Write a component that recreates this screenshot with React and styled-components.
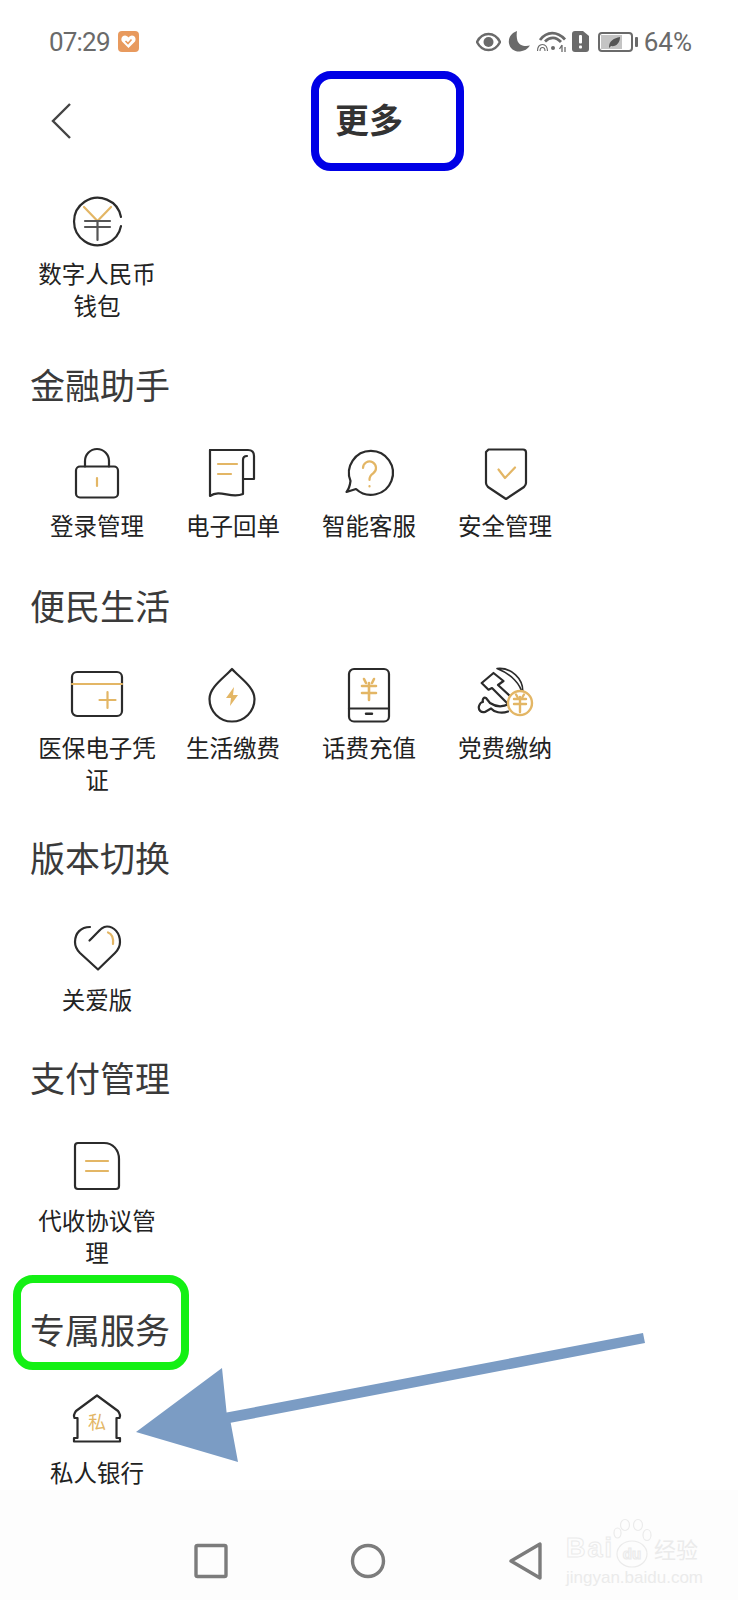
import React from "react";
import styled, { createGlobalStyle } from "styled-components";

const INK = "#2b2b2b";
const GOLD = "#e3b665";
const GREY = "#6a6a6a";
const MARK = "#ebebeb";

const GlobalStyle = createGlobalStyle`
  html, body {
    margin: 0;
    padding: 0;
    background: #fff;
  }
  body {
    font-family: "Noto Sans CJK SC", "Noto Sans", sans-serif;
  }
`;

const Page = styled.div`
  position: relative;
  width: 738px;
  height: 1600px;
  display: flex;
  flex-direction: column;
  overflow: hidden;
  background: #fff;
`;

const StatusBar = styled.div`
  height: 71px;
  padding: 12px 46px 0 49px;
  box-sizing: border-box;
  display: flex;
  align-items: center;
  color: ${GREY};
  font-family: Roboto, sans-serif;
  font-size: 26px;
`;

const StatusTime = styled.span`
  margin-right: 8px;
  letter-spacing: -0.8px;
`;

const StatusIcons = styled.div`
  margin-left: auto;
  display: flex;
  align-items: center;
`;

const StatusGlyph = styled.svg`
  margin-right: ${(p) => p.$after}px;
`;

const TopBar = styled.div`
  height: 100px;
  padding-left: 51px;
  display: flex;
  align-items: center;
`;

const TitleFrame = styled.div`
  margin-left: 240px;
  width: 153px;
  height: 100px;
  box-sizing: border-box;
  border: 8px solid #0000e6;
  border-radius: 20px;
  padding-left: 16px;
  display: flex;
  align-items: center;
`;

const Title = styled.h1`
  margin: 0 0 4px;
  font-size: 34px;
  line-height: 1.2;
  font-weight: 700;
  color: #333;
`;

const Section = styled.section`
  padding-left: 29px;
  margin-top: ${(p) => p.$top}px;
`;

const Heading = styled.h2`
  position: relative;
  width: fit-content;
  margin: 0 0 ${(p) => p.$gap}px 1px;
  font-size: 35px;
  line-height: 50px;
  font-weight: 400;
  color: #3a3a3a;

  ${(p) =>
    p.$marked &&
    `
    &::after {
      content: "";
      position: absolute;
      left: -17px;
      top: -29px;
      width: 176px;
      height: 95px;
      box-sizing: border-box;
      border: 8px solid #14f014;
      border-radius: 20px;
    }
  `}
`;

const Grid = styled.div`
  display: grid;
  grid-template-columns: repeat(4, 136px);
`;

const Item = styled.div`
  display: flex;
  flex-direction: column;
  align-items: center;
`;

const IconBox = styled.svg`
  width: 52px;
  height: 52px;
  overflow: visible;
  fill: none;
  stroke: ${INK};
  stroke-width: 2.2;
  stroke-linecap: round;
  stroke-linejoin: round;
`;

const Label = styled.div`
  width: 120px;
  margin-top: 10.5px;
  text-align: center;
  font-size: 23.5px;
  line-height: 32px;
  color: #222;
`;

const NavBar = styled.div`
  margin-top: auto;
  position: relative;
  height: 110px;
  padding-left: 132px;
  background: #fdfdfd;
  display: grid;
  grid-template-columns: repeat(3, 157.5px);
  align-items: center;
  justify-items: center;
`;

const NavIcon = styled.svg`
  width: 38px;
  height: 38px;
  margin-top: 31px;
  fill: none;
  stroke: #7c7c7c;
  stroke-width: 3.4;
  stroke-linejoin: round;
`;

const Watermark = styled.div`
  position: absolute;
  left: 566px;
  top: 30px;
  width: 132px;
  color: ${MARK};
`;

const WatermarkBrand = styled.div`
  display: flex;
  align-items: flex-end;
  height: 40px;
`;

const WatermarkLatin = styled.span`
  font-family: "Liberation Sans", sans-serif;
  font-size: 27px;
  line-height: 24px;
  font-weight: 700;
  letter-spacing: 2px;
  color: #fdfdfd;
  -webkit-text-stroke: 1px ${MARK};
`;

const WatermarkCjk = styled.span`
  margin-left: 2px;
  font-size: 22px;
  line-height: 24px;
  white-space: nowrap;
`;

const WatermarkSite = styled.div`
  margin-top: 8px;
  font-family: "Liberation Sans", sans-serif;
  font-size: 17px;
  line-height: 20px;
  white-space: nowrap;
`;

const Arrow = styled.svg`
  position: absolute;
  left: 0;
  top: 1320px;
  width: 738px;
  height: 160px;
`;

const Gold = (props) => <path stroke={GOLD} {...props} />;

const YuanIcon = () => (
  <IconBox viewBox="0 0 52 52" strokeWidth="2">
    <g transform="translate(0 -1)">
      <path d="M50 23A23.700 23.700 0 1 0 50 32" />
      <path d="M13 13L26.500 27L40 13" stroke={GOLD} />
      <path d="M14 27H39M14 33H39M26.500 27V46" stroke="#555" />
    </g>
  </IconBox>
);

const LockIcon = () => (
  <IconBox viewBox="0 0 52 52">
    <rect x="5" y="20.500" width="42" height="31" rx="4" />
    <path d="M14 20.500V15a12 12 0 0 1 24 0V20.500" />
    <Gold d="M26 32V40" />
  </IconBox>
);

const ReceiptIcon = () => (
  <IconBox viewBox="0 0 52 52">
    <path d="M3 4H41Q47 4 47 10V33H36" />
    <path d="M3 4V50C13 43 24 53 36 48V14Q36 10 40 10" />
    <Gold d="M11 18H30M11 28H24" />
  </IconBox>
);

const HelpIcon = () => (
  <IconBox viewBox="0 0 52 52">
    <path d="M7.500 35C7 39 6 43 3.500 46L13 43A22 22 0 1 0 7.500 35Z" />
    <Gold d="M20 22a6.500 6.500 0 1 1 10 5.500c-2.500 1.600-3.500 3.500-3.500 6.500M26.500 40V40.500" />
  </IconBox>
);

const ShieldIcon = () => (
  <IconBox viewBox="0 0 52 52">
    <path d="M9.500 3.500H44Q47 3.500 47 6.500V37Q47 39 45 41L27 53L9 41Q7 39 7 37V6Z" />
    <Gold d="M19.500 23.500L26 32L36 21.500" />
  </IconBox>
);

const CardIcon = () => (
  <IconBox viewBox="0 0 52 52">
    <rect x="1" y="4" width="50" height="44" rx="5" />
    <Gold d="M1 16H51M36.500 24V40M28.500 32H44.500" />
  </IconBox>
);

const DropIcon = () => (
  <IconBox viewBox="0 0 52 52">
    <path d="M25 1C33 10 47.500 19 47.500 31A22.500 22.500 0 0 1 2.500 31C2.500 19 17 10 25 1Z" />
    <polygon points="27,19 19,30 24,30 23,38 31,27 26,27" fill={GOLD} stroke="none" />
  </IconBox>
);

const PhoneIcon = () => (
  <IconBox viewBox="0 0 52 52">
    <rect x="6" y="1" width="40" height="52.500" rx="5" />
    <path d="M6 40.500H46" />
    <path d="M23 45.700H29" strokeWidth="2.400" />
    <Gold d="M21 11L23 15M31 11L29 15M19 18H33M19 25H33M26 15V32" strokeWidth="2.600" />
  </IconBox>
);

const PartyIcon = () => (
  <IconBox viewBox="0 0 52 52" strokeWidth="2">
    <path d="M2.700 15L14.500 5L24.500 13L19 17L35 31.700L29 36L13 20L9.500 21.700Z" />
    <path d="M18 .5C31 -1 46 10 43.500 27C42 16 32 6 18 .5Z" strokeWidth="1.600" />
    <path d="M29 43.500C22 46 15 44 12 40.500L6 44C2 45 -1 42 0 38C1 35 2 34 4 34C3 31 5 29 7 30L11 35C17 39 24 39 30 36" />
    <circle cx="41" cy="35" r="12" stroke={GOLD} fill="#fff" strokeWidth="2.400" />
    <Gold d="M37 26.500L38.500 29M45 26.500L43.500 29M35 31H47M35 36H47M41 29V44" strokeWidth="2.400" />
  </IconBox>
);

const HeartIcon = () => (
  <IconBox viewBox="0 0 52 52">
    <g transform="translate(0 2)">
      <path d="M19 5C10 5 4 11 4 20C4 25 6 28 9 31L27 47.500L44 31C47 28 49 25 49 20C49 11 43 4.500 36 4.500C31 4.500 29 8 18.500 18.500" />
      <Gold d="M37 10.500C41 12 42.500 17 42 22" />
    </g>
  </IconBox>
);

const DocIcon = () => (
  <IconBox viewBox="0 0 52 52">
    <path d="M7 2H33C42 2 48 9 48 18V45Q48 48 45 48H7Q4 48 4 45V5Q4 2 7 2Z" />
    <Gold d="M15 20H37M15 30H37" />
  </IconBox>
);

const HouseIcon = () => (
  <IconBox viewBox="0 0 52 52">
    <g transform="translate(0 1)">
      <path d="M26 1.500L47 17Q50 21 48.500 24H45.500V44H49V47.500H3V44H6.500V24H3.500Q2 21 5 17Z" />
      <text
        x="26"
        y="35"
        textAnchor="middle"
        fontSize="18"
        fill={GOLD}
        stroke="none"
        fontFamily="'Noto Sans CJK SC', sans-serif"
      >
        私
      </text>
    </g>
  </IconBox>
);

const PawMark = () => (
  <svg width="38" height="40" viewBox="0 0 38 40" fill="none" stroke={MARK} strokeWidth="1.200" style={{ overflow: "visible" }}>
    <ellipse cx="11" cy="5" rx="4.500" ry="5.500" />
    <ellipse cx="24" cy="5" rx="4.500" ry="5.500" />
    <ellipse cx="3.500" cy="13" rx="3.500" ry="5" />
    <ellipse cx="33" cy="15" rx="4" ry="5.500" />
    <ellipse cx="18" cy="34" rx="15" ry="13" />
    <text x="18" y="39" textAnchor="middle" fontSize="15" fontWeight="700" fontFamily="'Liberation Sans', sans-serif" fill="#fdfdfd">
      du
    </text>
  </svg>
);

const sections = [
  {
    top: 23.5,
    items: [{ label: "数字人民币钱包", icon: YuanIcon }],
  },
  {
    title: "金融助手",
    top: 38,
    gap: 37,
    items: [
      { label: "登录管理", icon: LockIcon },
      { label: "电子回单", icon: ReceiptIcon },
      { label: "智能客服", icon: HelpIcon },
      { label: "安全管理", icon: ShieldIcon },
    ],
  },
  {
    title: "便民生活",
    top: 39.5,
    gap: 38,
    items: [
      { label: "医保电子凭证", icon: CardIcon },
      { label: "生活缴费", icon: DropIcon },
      { label: "话费充值", icon: PhoneIcon },
      { label: "党费缴纳", icon: PartyIcon },
    ],
  },
  {
    title: "版本切换",
    top: 37.5,
    gap: 38,
    items: [{ label: "关爱版", icon: HeartIcon }],
  },
  {
    title: "支付管理",
    top: 37.5,
    gap: 39,
    items: [{ label: "代收协议管理", icon: DocIcon }],
  },
  {
    title: "专属服务",
    top: 36.5,
    gap: 39,
    marked: true,
    items: [{ label: "私人银行", icon: HouseIcon }],
  },
];

function StatusGlyphs() {
  return (
    <StatusIcons>
      <StatusGlyph $after={7} width="25" height="20" viewBox="0 0 25 20">
        <path d="M1 10C4 4 8 2 12.500 2S21 4 24 10C21 16 17 18 12.500 18S4 16 1 10Z" fill="none" stroke={GREY} strokeWidth="2.400" />
        <circle cx="12.500" cy="10" r="5" fill={GREY} />
      </StatusGlyph>
      <StatusGlyph $after={6} width="22" height="21" viewBox="0 0 22 21">
        <path d="M9 0C3 2 0 7 1 12.500C2 18 7 21 12 20.500C16 20 20 18 22 14.500C16 16 11 14 9.500 10C8.500 6 8.500 3 9 0Z" fill={GREY} />
      </StatusGlyph>
      <StatusGlyph $after={5} width="31" height="23" viewBox="0 0 31 23" fill="none" stroke={GREY}>
        <path d="M4 10C11 1 21 1 29 9.500" strokeWidth="2.800" />
        <path d="M9 11.500C14 6.500 20 6.500 25 12" strokeWidth="2.800" />
        <path d="M1.500 21C1.500 17 3.500 14.500 6.500 14.500S11.500 17 11.500 21M4 21C4 19 5 17.500 6.500 17.500S9 19 9 21" strokeWidth="1.100" />
        <circle cx="17" cy="18" r="2" fill={GREY} stroke="none" />
        <path d="M26 15V22M29 17V22M23.500 19L26 15" strokeWidth="1.300" />
      </StatusGlyph>
      <StatusGlyph $after={9} width="17" height="21" viewBox="0 0 17 21">
        <path d="M3 0H11L17 5V18Q17 21 14 21H3Q0 21 0 18V3Q0 0 3 0Z" fill={GREY} />
        <rect x="7" y="4" width="3" height="8.500" rx="1" fill="#fff" />
        <rect x="7" y="14.500" width="3" height="3" rx="1" fill="#fff" />
      </StatusGlyph>
      <StatusGlyph $after={5} width="41" height="20" viewBox="0 0 41 20">
        <rect x="1" y="1" width="33" height="18" rx="3" fill="none" stroke={GREY} strokeWidth="2" />
        <rect x="3" y="3" width="21" height="14" fill="#c4c4c4" />
        <path d="M11 15C11 9 16 6 22 5C22 11 18 15 13 14L11 16Z" fill="#555" />
        <rect x="37" y="5" width="3" height="10" rx="1" fill={GREY} />
      </StatusGlyph>
      <span>64%</span>
    </StatusIcons>
  );
}

export default function App() {
  return (
    <Page>
      <GlobalStyle />
      <StatusBar>
        <StatusTime>07:29</StatusTime>
        <svg width="21" height="21" viewBox="0 0 21 21">
          <rect width="21" height="21" rx="4" fill="#e89a5e" />
          <path d="M10.500 17L4 10.500C2.500 8 4 4.500 7 4.500C8.500 4.500 9.800 5.500 10.500 6.500C11.200 5.500 12.500 4.500 14 4.500C17 4.500 18.500 8 17 10.500Z" fill="#fff" />
          <path d="M7.500 10L10 12.500L13.500 8.500" fill="none" stroke="#e89a5e" strokeWidth="1.600" />
        </svg>
        <StatusGlyphs />
      </StatusBar>

      <TopBar>
        <svg width="20" height="36" viewBox="0 0 20 36" fill="none" stroke="#444" strokeWidth="2.400">
          <path d="M19 1L2 18L19 35" />
        </svg>
        <TitleFrame>
          <Title>更多</Title>
        </TitleFrame>
      </TopBar>

      {sections.map((section) => (
        <Section key={section.title || "wallet"} $top={section.top}>
          {section.title && (
            <Heading $gap={section.gap} $marked={section.marked}>
              {section.title}
            </Heading>
          )}
          <Grid>
            {section.items.map(({ label, icon: Icon }) => (
              <Item key={label}>
                <Icon />
                <Label>{label}</Label>
              </Item>
            ))}
          </Grid>
        </Section>
      ))}

      <NavBar>
        <NavIcon viewBox="0 0 38 38">
          <rect x="4" y="3.500" width="30" height="31" rx="1.500" />
        </NavIcon>
        <NavIcon viewBox="0 0 38 38">
          <circle cx="19" cy="19" r="15.500" />
        </NavIcon>
        <NavIcon viewBox="0 0 38 38">
          <path d="M33 2V36L4 19Z" />
        </NavIcon>
        <Watermark>
          <WatermarkBrand>
            <WatermarkLatin>Bai</WatermarkLatin>
            <PawMark />
            <WatermarkCjk>经验</WatermarkCjk>
          </WatermarkBrand>
          <WatermarkSite>jingyan.baidu.com</WatermarkSite>
        </Watermark>
      </NavBar>

      <Arrow viewBox="0 1320 738 160">
        <polygon
          points="136,1432 222,1368 226.600,1412.600 643,1333 645,1343 230.700,1422.800 238,1462"
          fill="#7b9cc4"
        />
      </Arrow>
    </Page>
  );
}
